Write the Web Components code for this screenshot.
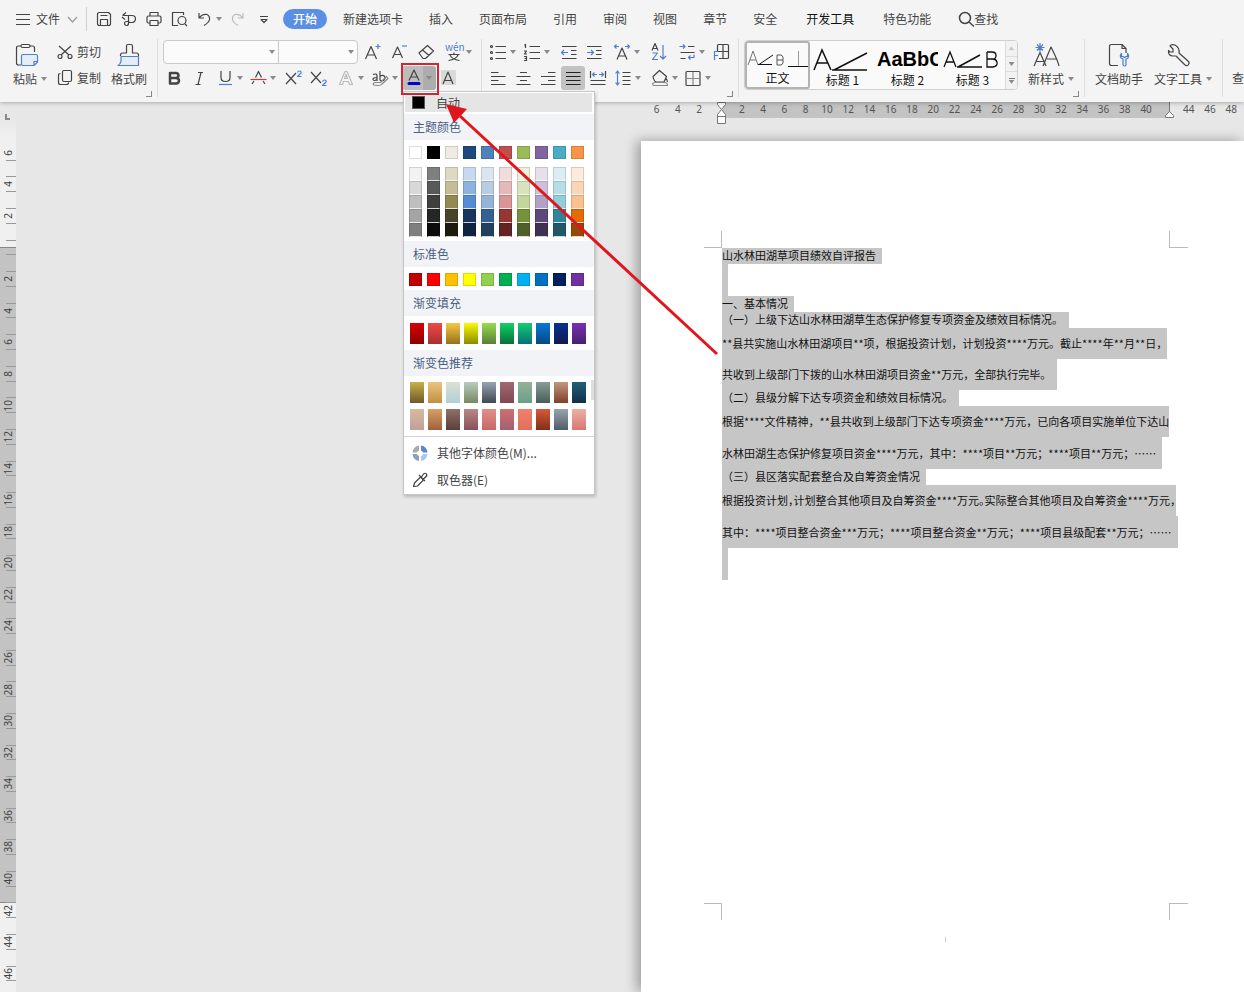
<!DOCTYPE html>
<html lang="zh-CN">
<head>
<meta charset="utf-8">
<title>文字编辑</title>
<style>
html,body{margin:0;height:100%}
body{font:12px/16px "Noto Sans CJK SC",sans-serif;color:#444;background:#e7e7e7;overflow:hidden}
</style>
</head>
<body>
<writer-app></writer-app>
<script>
const BASE = `<style>
*{box-sizing:border-box}
button,select{font:inherit;color:inherit;background:none;border:0;padding:0;margin:0;cursor:default}
button{white-space:nowrap}
</style>`;

function define(name, html, setup) {
  const t = document.createElement('template');
  t.innerHTML = BASE + html;
  customElements.define(name, class extends HTMLElement {
    constructor() {
      super();
      this.attachShadow({mode: 'open'}).append(t.content.cloneNode(true));
    }
    connectedCallback() { if (setup && !this.ready) { this.ready = true; setup.call(this, this.shadowRoot); } }
  });
}

/* 24x24 line icons; "b" marks the blue accent strokes */
const ICONS = {
  burger: '<path d="M5 7.5h14M5 12.5h14M5 17.5h14"/>',
  chevron: '<path stroke="#999" d="M8 10l4.500 5 4.500-5"/>',
  save: '<path d="M5.500 7.500q0-2 2-2h9l2 2v9q0 2-2 2h-9q-2 0-2-2zM8.500 18v-5.500h7V18M8.500 8.500h7"/>',
  export: '<path d="M5.500 8.500h9.500a3.500 3.500 0 0 1 0 7h-3M9 5.500l-3.500 3M8 12.500L5 10M11.500 9v7.500a2 2 0 0 1-4 0q0-2 2-2h3"/>',
  print: '<path d="M8 9V5.500h8V9M8 16H6.500Q5 16 5 14.500v-4Q5 9 6.500 9h11q1.500 0 1.500 1.500v4q0 1.500-1.500 1.500H16M8 13.500h8v5H8z"/>',
  preview: '<path d="M11 18.500H5.500v-13h11V8M18 17l2 2"/><circle cx="15" cy="13.500" r="4"/>',
  undo: '<path d="M7 6v5h5M7 11q3.500-4.500 8-3.500 3 1.500 2.500 5-.5 3-5.500 6"/>',
  redo: '<path stroke="#bbb" d="M17 6v5h-5M17 11q-3.500-4.500-8-3.500-3 1.500-2.500 5 .5 3 5.500 6"/>',
  more: '<path d="M8 9.500h8M9 12.500l3 3 3-3z"/>',
  search: '<circle cx="11" cy="11" r="5.500" stroke-width="1.500"/><path stroke-width="1.500" d="M15 15l5 4.500"/>',
  cut: '<path d="M6 6l10 9M18 6L8 15"/><circle cx="7" cy="16.500" r="2"/><circle cx="17" cy="16.500" r="2"/>',
  copy: '<rect x="9.500" y="4.500" width="9" height="11" rx="1.500"/><path d="M7.500 7.500q-2 0-2 2v7q0 2 2 2h6q2 0 2-2"/>',
  paste: '<path d="M7 22H4.500Q2.500 22 2.500 20V5q0-2 2-2H7M16 3h2.500q2 0 2 2v4"/><rect x="7" y="1.500" width="9" height="3" rx="1.500"/><path class="b f" d="M9 11.500h13q1.500 0 1.500 1.500v6L20 22.500H9q-1.500 0-1.500-1.500v-8q0-1.500 1.500-1.500zM23 18.500h-3v4"/>',
  brush: '<path class="b f" d="M4 13.500h17.500v9H1q2-1 3-4z"/><path d="M3.500 13v-1q0-2 2-2h4V3q0-1.500 1.500-1.500h3q1.500 0 1.500 1.500v7h4q2 0 2 2v1"/>',
  bold: '<path stroke-width="2.500" d="M8 7h5.500q3 .2 3 2.500t-3 2.500H8h6q3 .2 3 2.700T14 17.500H8z"/>',
  italic: '<path d="M11 6.500h5M8.500 18.500h5M14 6.500l-3 12"/>',
  underline: '<path d="M8 5v6.500q0 4 4.500 4t4.500-4V5"/><path class="b" d="M6 18.500h13"/>',
  strike: '<path d="M6 18l2-3M19 18l-2-3M9.500 11.500L12.500 5.500l3 6"/><path class="r" d="M4.500 13.500h16"/>',
  sup: '<path d="M5 7l10 11M15 7L5 18"/><path class="b" d="M16.500 6.500q.5-1.500 2-1.500 2 0 1.500 2l-3.500 3.500h4"/>',
  sub: '<path d="M5 6l10 11M15 6L5 17"/><path class="b" d="M16.500 15.500q.5-1.500 2-1.500 2 0 1.500 2l-3.500 3.500h4"/>',
  outlineA: '<path stroke="#bbb" d="M5.500 18.500L11 5.500h2l5.500 13h-3l-1-3h-5l-1 3zM10.500 12.500h3L12 8.500z"/>',
  highlight: '<path d="M5 8.500q4-1.500 4 1.500v5M9 11.500q-4.500 0-4 2 1 2 4 0M12 5v9.500M12 10q5-2 5 2.500-1 3-5 2"/><path d="M5.500 19q-1-2.500 2-2.500h5l6-6 1.500 2-6 5.500q-1 1.500-4 1.500z" stroke="#888"/>',
  colorA: '<path d="M7 14.500L12 4l5 10.500M8.500 11h7"/><rect x="5.500" y="16" width="13" height="3" rx="1.500" fill="#0000d0" stroke="none"/>',
  shadeA: '<rect x="5" y="4" width="15" height="15" fill="#d9d9d9" stroke="none"/><path d="M7 18l5-12 5 12M8.500 14.500h7"/>',
  growA: '<path d="M4.500 19L10 6.500 15.500 19M6.500 15h7"/><path class="b" d="M14.500 6.500h5M17 4v5"/>',
  shrinkA: '<path d="M5.500 18L10.500 7l5 11M7.500 14.500h6"/><path class="b" d="M15 6h5"/>',
  eraser: '<path d="M5 13l8.500-7.500 6 5.500-8 7.500H9zM8.500 10l6.500 5.500"/>',
  pinyin: '<path d="M6.500 14.500h11M12 12.500v2M8 15q2 4.500 9.500 5.500M16 15q-2 4.500-9.500 5.500"/>',
  bullets: '<path d="M9.500 6.500H20M9.500 12.500H20M9.500 18.500H20"/><circle cx="5.500" cy="6.500" r="1"/><circle cx="5.500" cy="12.500" r="1"/><circle cx="5.500" cy="18.500" r="1"/>',
  numbers: '<path d="M9.500 6.500H20M9.500 12.500H20M9.500 18.500H20M4.500 5.500l1-1V8M4 11h2.500l-2 3H7M4 16.500h2.500v4H4M4.500 18.500h2"/>',
  outdent: '<path d="M5 6.500h14.500M14 10.500h5.500M14 14.500h5.500M5 18.500h14.500"/><path class="b" d="M11 12.500H4.500M7 10l-2.500 2.500L7 15"/>',
  indent: '<path d="M5 6.500h14.500M14 10.500h5.500M14 14.500h5.500M5 18.500h14.500"/><path class="b" d="M5 12.500h6.500M9 10l2.500 2.500L9 15"/>',
  scaleA: '<path d="M7 19.500L12 8l5 11.500M9 16h6"/><path class="b" d="M9 6.500H4.500M6.500 4.500l-2 2 2 2M15 6.500h4.500M17.500 4.500l2 2-2 2"/>',
  sort: '<path d="M5 10.500l3-7 3 7M6 8.500h4"/><path class="b" d="M5.500 13h5l-5 6.500h5.500M16 5v14M13 16l3 3 3-3"/>',
  wrap: '<path d="M13 6.500h6.500M5.500 12.500h14M5.500 18.500h5"/><path class="b" d="M4.500 6.500H10M8 4.500l2 2-2 2M19 14.500v3h-5.500M15.500 15.500l-2 2 2 2"/>',
  tableF: '<path d="M8.500 11V5.500q0-1 1-1h9q1 0 1 1v12q0 1-1 1H10M14 4.500v14M8.500 11.500h11"/><path class="b" d="M5.500 20v-8.500H9M5.500 15.500H9"/>',
  left: '<path d="M5 6.500h7.500M5 10.500h14.500M5 14.500h7.500M5 18.500h14.500"/>',
  center: '<path d="M9 6.500h7M5.500 10.500h14M9 14.500h7M5.500 18.500h14"/>',
  right: '<path d="M12 6.500h7.500M5 10.500h14.500M12 14.500h7.500M5 18.500h14.500"/>',
  justify: '<path stroke="#222" d="M5 6.500h14.500M5 10.500h14.500M5 14.500h14.500M5 18.500h14.500"/>',
  distribute: '<path d="M4.500 5v7M19.500 5v7M4.500 14.500h15M4.500 18.500h15"/><path class="b" d="M11 8.500H6.500M8.500 6.500l-2 2 2 2M13 8.500h4.500M15.500 6.500l2 2-2 2"/>',
  lines: '<path d="M11.500 6.500h8M11.500 10.500h8M11.500 14.500h8M11.500 18.500h8"/><path class="b" d="M6.500 5v14M4.500 7.500L6.500 5l2 2.500M4.500 16.500l2 2.500 2-2.500"/>',
  fill: '<path d="M11.500 4.500L5 10.500q1 5 3 5.500h8l2.500-5.500zM17.500 12q2.500 3 1.500 4"/><path stroke="#888" d="M5 19q-1-2 1.500-2.500h11q2 .5 2 3H6z"/>',
  border: '<rect x="5" y="5.500" width="14" height="14" rx="1"/><path stroke="#888" d="M12 6v13M6 12.500h12.500"/>',
  newStyle: '<path d="M-1 23L5 9.500 11 23M1 18.500h8M8 23L16 4q7 14 8 19M12 16h10"/><path class="b" d="M5 0v9M.5 4.500h9M2 1.500l6 6M8 1.500l-6 6"/>',
  docHelp: '<path d="M11 22.500H4.500q-2 0-2-2v-17q0-2 2-2H15l4 4V10M15 1.500V5.500h4"/><path class="b f" d="M14.500 10.500q-2 2-.5 4.500l2 1v6q1.500 2 3 0v-6l2-1q1.500-2.500-.5-4.500v3h-1.500l-1.500 1-1.500-1H14.500z"/>',
  wrench: '<path d="M8 2q-4-1-5 1l3 3v3H3L1.500 7.500Q1 13 6 13h3l9 9q2 1.500 3.500-.5T21 18l-9-8q1-5-4-8z"/>',
  picker: '<path d="M5.500 18.500l1-3.500 6-6 3 3-6 6zM11 7l6 6M13.500 9l2-3q2-1.500 3 0t-1 3l-2 2"/>',
  palette: '<g stroke="none"><path fill="#aaa" d="M11 4.500V9.500a3 3 0 0 0-2 2H4.500a8 8 0 0 1 6.500-7z"/><path fill="#5a86d0" d="M13 4.500V9.500a3 3 0 0 1 2 2h4.500a8 8 0 0 0-6.500-7z"/><path fill="#a9c8ef" d="M13 20v-5a3 3 0 0 0 2-2h4.500a8 8 0 0 1-6.500 7z"/><path fill="#8fa0b5" d="M11 20v-5a3 3 0 0 1-2-2H4.500a8 8 0 0 0 6.500 7z"/></g>'
};

define('ui-icon', `<style>
:host{display:block;width:24px;height:24px;flex:none}
svg{display:block;overflow:visible;fill:none;stroke:#444;stroke-width:1.2;stroke-linejoin:round}
.b{stroke:#4f7fcf}.r{stroke:#d03a40}.f{fill:#e4eefb}
</style><svg width="24" height="24" viewBox="0 0 24 24" aria-hidden="true"></svg>`,
function (r) { r.querySelector('svg').innerHTML = ICONS[this.getAttribute('name')] || ''; });

define('ui-caret', `<style>
:host{display:block;flex:none;width:6px;height:4px;background:#8a8a8a;clip-path:polygon(0 0,100% 0,50% 100%)}
</style>`);

define('tool-button', `<style>
:host{display:block}
button{display:flex;align-items:center;height:24px}
:host([active]) button{background:#c2c2c2;border-radius:3px}
ui-caret{display:none}
:host([caret]) ui-caret{display:block}
</style><button><ui-icon></ui-icon><ui-caret></ui-caret></button>`,
function (r) {
  const n = this.getAttribute('icon');
  const i = r.querySelector('ui-icon'), c = document.createElement('ui-icon');
  c.setAttribute('name', n); i.replaceWith(c);
  r.querySelector('button').setAttribute('aria-label', n);
});

/* icon above (or before) a caption */
define('big-button', `<style>
:host{display:block}
button{display:flex;flex-direction:column;align-items:center;gap:4px}
:host([inline]) button{flex-direction:row;height:24px;gap:0}
span{display:flex;align-items:center;gap:4px}
ui-caret{display:none}
:host([caret]) ui-caret{display:block}
:host([caret]) .pic{margin-right:8px}
</style><button><div class="pic"></div><span><slot></slot><ui-caret></ui-caret></span></button>`,
function (r) {
  const c = document.createElement('ui-icon');
  c.setAttribute('name', this.getAttribute('icon'));
  r.querySelector('.pic').append(c);
});

define('menu-bar', `<style>
:host{display:flex;align-items:center;height:38px;padding-left:11px;white-space:nowrap}
nav{display:flex;align-items:center;gap:26px;margin-left:7px}
button{display:flex;align-items:center;height:20px}
.file ui-icon:first-child{margin-right:1px}
.sep{width:1px;height:24px;background:#cfcfcf;margin:0 5px 0 2px}
.quick{display:flex;align-items:center;gap:1px}
.home{background:#5b8fe6;color:#fff;font-weight:500;border-radius:10px;padding:0 10px}
.home + button{margin-left:-10px}
.wide{margin-left:3px}
.dev{color:#111}
.find{margin-left:23px}
.find ui-icon{margin-right:-4px}
.undo{width:33px}.redo{width:25px}
</style>
<button class="file"><ui-icon name="burger"></ui-icon>文件<ui-icon name="chevron"></ui-icon></button>
<div class="sep"></div>
<div class="quick">
<tool-button icon="save"></tool-button><tool-button icon="export"></tool-button><tool-button icon="print"></tool-button><tool-button icon="preview"></tool-button>
<tool-button class="undo" icon="undo" caret></tool-button><tool-button class="redo" icon="redo"></tool-button><tool-button icon="more"></tool-button>
</div>
<nav>
<button class="home">开始</button><button>新建选项卡</button><button>插入</button><button>页面布局</button><button>引用</button><button>审阅</button><button>视图</button><button>章节</button><button>安全</button><button class="wide dev">开发工具</button><button class="wide">特色功能</button>
</nav>
<button class="find"><ui-icon name="search"></ui-icon>查找</button>`);

define('color-row', `<style>
:host{display:flex;gap:5px;padding-left:5px}
:host([gradient]){gap:4px;padding-left:6px}
button{width:13px;height:13px;border:1px solid #0002;flex:none}
:host([gradient]) button{width:14px;height:21px;border:0}
:host([tight]) button{height:14px;border-bottom-color:#fffc}
</style>`,
function (r) {
  for (const c of this.getAttribute('colors').split(' ')) {
    const b = document.createElement('button'), p = c.split('-');
    b.setAttribute('aria-label', '#' + c);
    b.style.background = p[1] ? `linear-gradient(#${p[0]},#${p[1]})` : '#' + c;
    r.append(b);
  }
});

define('color-menu', `<style>
:host{display:block;width:192px;height:404px;background:#fff;border:1px solid #c6c6c6;box-shadow:1px 2px 3px #0003}
.auto{display:flex;align-items:center;gap:11px;width:187px;height:19px;margin:1px 0 0 1px;padding-left:7px;background:#e5e5e5}
.auto i{width:13px;height:13px;background:#000;border:1px solid #555}
h3{margin:0;font-size:12px;font-weight:400;line-height:26px;height:26px;color:#4c5f82;background:#f1f3f6;padding-left:9px}
.t{margin-top:2px}
.base{margin:6px 0 8px}
.shades{margin-bottom:4px}
.std{margin:6px 0 4px}
.grad{margin:7px 0 6px}
.rec{margin:6px 0 6px;display:grid;gap:6px;position:relative}
.rec::after{content:"";position:absolute;right:0;top:-2px;width:3px;height:20px;background:#ddd}
hr{margin:0;border:0;border-top:1px solid #d0d0d0}
.item{display:flex;align-items:center;gap:5px;height:27px;padding-left:4px}
.item.first{margin-top:2px}
</style>
<button class="auto"><i></i>自动</button>
<h3 class="t">主题颜色</h3>
<color-row class="base" colors="ffffff 000000 eeece1 1f497d 4f81bd c0504d 9bbb59 8064a2 4bacc6 f79646"></color-row>
<div class="shades">
<color-row tight colors="f2f2f2 7f7f7f ddd9c3 c6d9f0 dbe5f1 f2dcdb ebf1dd e5e0ec dbeef3 fdeada"></color-row>
<color-row tight colors="d8d8d8 595959 c4bd97 8db3e2 b8cce4 e5b9b7 d7e3bc ccc1d9 b7dde8 fbd5b5"></color-row>
<color-row tight colors="bfbfbf 3f3f3f 938953 548dd4 95b3d7 d99694 c3d69b b2a1c7 92cddc fac08f"></color-row>
<color-row tight colors="a5a5a5 262626 494429 17365d 366092 953734 76923c 5f497a 31859b e36c09"></color-row>
<color-row tight colors="7f7f7f 0c0c0c 1d1b10 0f243e 244061 632423 4f6128 3f3151 205867 974806"></color-row>
</div>
<h3>标准色</h3>
<color-row class="std" colors="c00000 ff0000 ffc000 ffff00 92d050 00b050 00b0f0 0070c0 002060 7030a0"></color-row>
<h3>渐变填充</h3>
<color-row class="grad" gradient colors="d80000-8e0000 f04848-a83030 f5c842-94701a fafa00-8a8a00 98dc50-587f38 10d068-087038 14cc70-087078 0878d8-084880 083090-101c50 7830b0-482070"></color-row>
<h3>渐变色推荐</h3>
<div class="rec">
<color-row gradient colors="c8b048-705828 ecc480-c09040 dce0d0-b0d0d8 b8ccc0-788860 98a4b4-404850 a06870-804850 98b098-68a088 889c98-485c58 c09880-804028 206078-103048"></color-row>
<color-row gradient colors="d8b8a0-c0a098 d8a068-a06038 907068-584038 b88888-885058 e09088-c86868 d07070-a06070 f08070-e07058 d85838-803018 98a4b0-505c68 ecb0a8-d87870"></color-row>
</div>
<hr>
<button class="item first"><ui-icon name="palette"></ui-icon>其他字体颜色(M)...</button>
<button class="item"><ui-icon name="picker"></ui-icon>取色器(E)</button>`);

define('font-color', `<style>
:host{display:block;position:relative;z-index:5}
.split{display:flex;align-items:center;width:34px;height:24px;background:linear-gradient(90deg,#bdbdbd 21px,#adadad 21px);border-radius:3px}
color-menu{position:absolute;left:1px;top:25px}
.frame{position:absolute;left:-1px;top:-3px;width:38px;height:32px;border:2px solid #d22630;z-index:1;pointer-events:none}
</style><button class="split" aria-label="字体颜色"><ui-icon name="colorA"></ui-icon><ui-caret></ui-caret></button>
<color-menu></color-menu><div class="frame"></div>`);

define('ribbon-group', `<style>
:host{display:block;position:relative;flex:none;height:58px;border-right:1px solid #dedede}
:host([launcher])::after{content:"";position:absolute;right:5px;bottom:0;width:5px;height:5px;border:solid #888;border-width:0 1px 1px 0}
</style><slot></slot>`);

const PREVIEW = {
  body: '<path stroke="#777" d="M3 23l5-14 5 14M5 18h6"/><path d="M14 22.500L28 13M13 22.500h14"/><path stroke="#555" d="M32 13v10h4q3-1 2-5h-6M32 13h4q3 1 2 5"/><path d="M43 24.500h21"/><path stroke="#999" d="M53.500 9v15"/>',
  h1: '<path stroke-width="1.500" d="M4 27l8-20 9 20M7 20h11"/><path stroke-width="1.500" d="M24 27L57 10M22 27h35"/>',
  h3: '<path stroke-width="1.300" d="M4 24l6-15 6 15M6 19h8"/><path stroke-width="1.500" d="M18 24l22-12M17 24h25"/><path stroke-width="1.300" d="M47 9v15h6q5-1 4-5-1-3-4-3h-6M47 9h5q4 0 4 3.500T53 16"/>'
};
define('style-card', `<style>
:host{display:block;width:65px;height:48px;flex:none}
button{display:block;position:relative;width:65px;height:48px;overflow:hidden;color:#111;text-align:center}
:host([selected]) button{border:2px solid #b3b3b3;border-radius:3px}
svg{display:block;fill:none;stroke:#111}
:host([selected]) svg{margin:-2px -2px -1px}
.sample{height:29px;padding:4px 0 0 2px;text-align:left;font:bold 20px/25px "Liberation Sans",sans-serif;color:#000;width:63px;overflow:hidden}
.name{display:block;line-height:16px}
</style><button><div class="top"></div><span class="name"><slot></slot></span></button>`,
function (r) {
  const k = this.getAttribute('kind'), top = r.querySelector('.top');
  if (PREVIEW[k]) top.innerHTML = `<svg width="65" height="29" viewBox="0 0 65 29">${PREVIEW[k]}</svg>`;
  else { top.className = 'sample'; top.textContent = 'AaBbC'; }
});

define('tool-ribbon', `<style>
:host{display:flex;height:64px;padding-top:1px;white-space:nowrap}
.clip{display:flex;width:158px;padding-left:13px}
.col{display:grid;gap:2px;align-content:start;padding-top:1px}
.clip big-button{padding-top:4px}
.clip .col big-button{padding-top:0}
.clip .col{margin:0 10px 0 6px}
.row{display:grid;height:24px;margin-bottom:2px;align-items:center}
.font{width:324px;padding:1px 0 0 4px}
.f1{grid-template-columns:199px 26px 27px 28px 30px}
.f2{grid-template-columns:25px 26px 33px 35px 25px 28px 34px 34px 34px 24px}
.combo{display:flex;width:195px;height:24px;margin-left:1px;border:1px solid #c9c9c9;border-radius:4px;background:#fbfbfb}
label{display:flex;align-items:center;width:114px;position:relative}
label + label{width:79px;border-left:1px solid #c9c9c9}
select{appearance:none;width:100%;height:100%}
label ui-caret{position:absolute;right:3px}
.wen{position:relative}
.wen span{position:absolute;left:3px;top:1px;font-size:10px;line-height:12px;color:#4f7fcf}
.para{width:257px;padding:1px 0 0 4px}
.p1{grid-template-columns:34px 37px 25px 28px 37px 28px 34px 24px}
.p2{grid-template-columns:25px 25px 25px 25px 25px 37px 33px 32px}
.styles{display:flex;width:346px;padding:1px 0 0 5px}
.gallery{display:flex;width:274px;height:50px;border:1px solid #cfcfcf;border-radius:4px;background:#fafafa;overflow:hidden}
.scroll{display:grid;flex:1;background:#f2f2f2;border-left:1px solid #ddd}
.scroll button{display:grid;place-items:center;place-content:center;gap:1px}
.scroll button + button{border-top:1px solid #ddd}
.scroll .up{opacity:.4;rotate:180deg}
.scroll i{width:6px;height:1px;background:#777}
.styles big-button{margin:3px 0 0 10px}
.tools{display:flex;width:138px;gap:11px;padding:4px 0 0 10px}
.last{padding:31px 0 0 9px;border:0}
</style>
<ribbon-group launcher class="clip">
<big-button icon="paste" caret>粘贴</big-button>
<div class="col"><big-button inline icon="cut">剪切</big-button><big-button inline icon="copy">复制</big-button></div>
<big-button icon="brush">格式刷</big-button>
</ribbon-group>
<ribbon-group class="font">
<div class="row f1"><div class="combo"><label><select aria-label="字体"></select><ui-caret></ui-caret></label><label><select aria-label="字号"></select><ui-caret></ui-caret></label></div>
<tool-button icon="growA"></tool-button><tool-button icon="shrinkA"></tool-button><tool-button icon="eraser"></tool-button><div class="wen"><tool-button icon="pinyin" caret></tool-button><span>wén</span></div></div>
<div class="row f2"><tool-button icon="bold"></tool-button><tool-button icon="italic"></tool-button><tool-button icon="underline" caret></tool-button><tool-button icon="strike" caret></tool-button><tool-button icon="sup"></tool-button><tool-button icon="sub"></tool-button><tool-button icon="outlineA" caret></tool-button><tool-button icon="highlight" caret></tool-button><font-color></font-color><tool-button icon="shadeA"></tool-button></div>
</ribbon-group>
<ribbon-group launcher class="para">
<div class="row p1"><tool-button icon="bullets" caret></tool-button><tool-button icon="numbers" caret></tool-button><tool-button icon="outdent"></tool-button><tool-button icon="indent"></tool-button><tool-button icon="scaleA" caret></tool-button><tool-button icon="sort"></tool-button><tool-button icon="wrap" caret></tool-button><tool-button icon="tableF"></tool-button></div>
<div class="row p2"><tool-button icon="left"></tool-button><tool-button icon="center"></tool-button><tool-button icon="right"></tool-button><tool-button icon="justify" active></tool-button><tool-button icon="distribute"></tool-button><tool-button icon="lines" caret></tool-button><tool-button icon="fill" caret></tool-button><tool-button icon="border" caret></tool-button></div>
</ribbon-group>
<ribbon-group launcher class="styles">
<div class="gallery"><style-card kind="body" selected>正文</style-card><style-card kind="h1">标题 1</style-card><style-card kind="h2">标题 2</style-card><style-card kind="h3">标题 3</style-card>
<div class="scroll"><button class="up" aria-label="上"><ui-caret></ui-caret></button><button aria-label="下"><ui-caret></ui-caret></button><button aria-label="更多"><i></i><ui-caret></ui-caret></button></div></div>
<big-button icon="newStyle" caret>新样式</big-button>
</ribbon-group>
<ribbon-group class="tools"><big-button icon="docHelp">文档助手</big-button><big-button icon="wrench" caret>文字工具</big-button></ribbon-group>
<ribbon-group class="last">查</ribbon-group>`);

define('ruler-top', `<style>
:host{display:flex;position:relative;height:16px;padding:0 2px 0 646px;font:10px/15px "Noto Sans",sans-serif;color:#555;
background:linear-gradient(90deg,#e7e7e7 721px,#c3c3c3 721px,#c3c3c3 1169px,#e7e7e7 1169px)}
span{flex:1;text-align:center;min-width:0}
svg{position:absolute;top:0;fill:#fff;stroke:#777;overflow:visible}
.a{left:716px}.b{left:1164px}
.tab{position:absolute;left:5px;top:12px;width:5px;height:6px;border:solid #888;border-width:0 0 2px 2px;z-index:1}
</style><i class="tab"></i><svg class="a" width="11" height="22"><path d="M1.500.5h8v2l-4 5 4 5v9h-8v-9l4-5-4-5zM1.500 14.500h8"/></svg><svg class="b" width="11" height="16"><path d="M5.500 0v10M1.500 15.500v-2l4-4 4 4v2z"/></svg>`,
function (r) {
  for (let n = -6; n <= 48; n += 2) {
    const s = document.createElement('span');
    s.textContent = n === 0 || n === 42 ? '' : Math.abs(n);
    r.append(s);
  }
});

define('ruler-side', `<style>
:host{display:flex;flex-direction:column;flex:none;width:16px;padding:19px 0 3px;font:10px/10px "Noto Sans",sans-serif;color:#444;
background:linear-gradient(#e7e7e7,#f0f0f0 20px,#f0f0f0 129px,#888 129px,#888 130px,#c3c3c3 130px,#c3c3c3 784px,#888 784px,#888 785px,#f0f0f0 785px)}
div{flex:1;display:flex;align-items:center;position:relative;padding-left:3px;min-height:0}
div::before{content:"";position:absolute;left:6px;right:0;top:25%;bottom:25%;border:solid #999;border-width:1px 0}
div:first-of-type::before{border-top:0}
span{writing-mode:vertical-rl;transform:rotate(180deg)}
</style>`,
function (r) {
  for (let n = -6; n <= 46; n += 2) {
    const d = document.createElement('div'), s = document.createElement('span');
    s.textContent = n === 0 ? '' : Math.abs(n);
    d.append(s); r.append(d);
  }
});

define('doc-line', `<style>
:host{display:block;height:16px;line-height:14px;white-space:nowrap}
:host([tall]){height:31px;line-height:31px}
:host([gap]){height:32px;line-height:32px}
span{display:inline-block;height:100%;background:#c6c6c6;vertical-align:top;padding-right:6px}
:host([full]) span{padding-right:0}
:host([tight]) span{font-feature-settings:"halt"}
</style><span><slot></slot></span>`);

define('doc-page', `<style>
:host{display:grid;grid-template-columns:18px 447px 19px;grid-template-rows:17px 655px 17px 22px;align-content:start;padding:90px 0 0 63px;background:#fff;box-shadow:-4px 0 12px #0005;flex:1;min-width:0;
font:11px/16px "Noto Sans CJK SC",sans-serif;color:#111}
i{border:0 solid #bbb}
.tl{border-width:0 1px 1px 0}.tr{border-width:0 0 1px 1px;grid-column:3}
.bl{border-width:1px 1px 0 0;grid-row:3}.br{border-width:1px 0 0 1px;grid-row:3;grid-column:3}
.dot{grid-area:4/2;place-self:end center;width:1px;height:5px;background:#ccc}
article{grid-area:2/2}
</style><i class="tl"></i><i class="tr"></i><i class="bl"></i><i class="br"></i><i class="dot"></i>
<article>
<doc-line>山水林田湖草项目绩效自评报告</doc-line>
<doc-line gap></doc-line>
<doc-line>一、基本情况</doc-line>
<doc-line>（一）上级下达山水林田湖草生态保护修复专项资金及绩效目标情况。</doc-line>
<doc-line tall full>**县共实施山水林田湖项目**项，根据投资计划，计划投资****万元。截止****年**月**日，</doc-line>
<doc-line tall>共收到上级部门下拨的山水林田湖项目资金**万元，全部执行完毕。</doc-line>
<doc-line>（二）县级分解下达专项资金和绩效目标情况。</doc-line>
<doc-line tall full>根据****文件精神，**县共收到上级部门下达专项资金****万元，已向各项目实施单位下达山</doc-line>
<doc-line gap>水林田湖生态保护修复项目资金****万元，其中：****项目**万元；****项目**万元；……</doc-line>
<doc-line>（三）县区落实配套整合及自筹资金情况</doc-line>
<doc-line tall full tight>根据投资计划，计划整合其他项目及自筹资金****万元。实际整合其他项目及自筹资金****万元，</doc-line>
<doc-line gap>其中：****项目整合资金***万元；****项目整合资金**万元；****项目县级配套**万元；……</doc-line>
<doc-line gap></doc-line>
</article>`);

define('writer-app', `<style>
:host{display:flex;flex-direction:column;height:100vh;position:relative;overflow:hidden}
header{background:#f4f4f4;box-shadow:0 1px 4px #0004;position:relative;z-index:3}
ruler-top{z-index:2}
main{display:flex;flex:1;min-height:0}
.canvas{display:flex;flex:1;min-width:0;padding:23px 0 0 625px}
.arrow{position:absolute;left:0;top:0;z-index:9;pointer-events:none}
</style>
<header><menu-bar></menu-bar><tool-ribbon></tool-ribbon></header>
<ruler-top></ruler-top>
<main><ruler-side></ruler-side><div class="canvas"><doc-page></doc-page></div></main>
<svg class="arrow" width="730" height="370"><path d="M717 354L460 116" stroke="#e0161e" stroke-width="3"/><path d="M446 104l21 5-13 14z" fill="#e0161e"/></svg>`);
</script>
</body>
</html>
